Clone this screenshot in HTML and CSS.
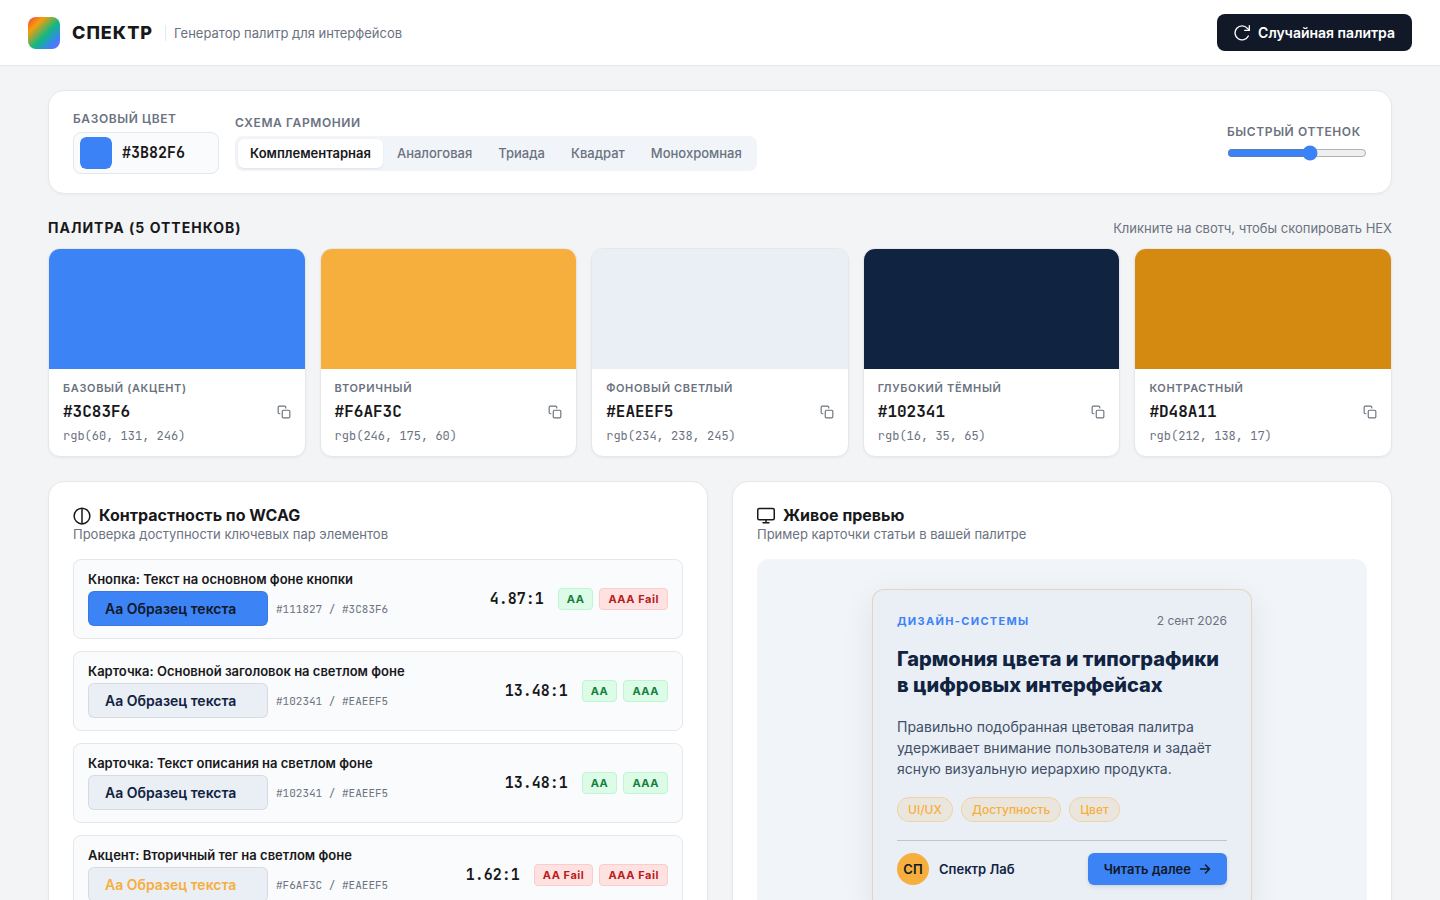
FILE: index.html
```html
<!DOCTYPE html>
<html lang="ru">
<head>
<meta charset="utf-8">
<meta name="viewport" content="width=device-width, initial-scale=1">
<title>Спектр — генератор палитр</title>
<link rel="stylesheet" href="styles.css">
</head>
<body>
<svg class="sprite" aria-hidden="true">
  <symbol id="copy" viewBox="0 0 24 24" fill="none" stroke="currentColor" stroke-width="2" stroke-linecap="round" stroke-linejoin="round">
    <rect x="9" y="9" width="13" height="13" rx="2"/>
    <path d="M5 15H4a2 2 0 0 1-2-2V4a2 2 0 0 1 2-2h9a2 2 0 0 1 2 2v1"/>
  </symbol>
</svg>

<header class="topbar">
  <div class="brand">
    <span class="logo"></span>
    <h1 class="brand-name">СПЕКТР</h1>
    <span class="tagline">Генератор палитр для интерфейсов</span>
  </div>
  <button class="btn-random" type="button">
    <svg width="16" height="16" viewBox="0 0 24 24" fill="none" stroke="currentColor" stroke-width="2" stroke-linecap="round" stroke-linejoin="round" aria-hidden="true"><path d="M23 1v7h-7"/><path d="M21.5 16.5A10.5 10.5 0 1 1 20 5l3 3"/></svg>
    Случайная палитра
  </button>
</header>

<main class="page">
  <section class="panel controls">
    <div class="control">
      <label class="control-label" for="hex">Базовый цвет</label>
      <div class="color-field">
        <input class="color-pick" type="color" value="#3b82f6" aria-label="Выбор базового цвета">
        <input class="color-hex" id="hex" type="text" value="#3B82F6">
      </div>
    </div>
    <div class="control">
      <span class="control-label" id="scheme">Схема гармонии</span>
      <div class="segmented" role="group" aria-labelledby="scheme">
        <button class="segment segment-active" type="button" aria-pressed="true">Комплементарная</button>
        <button class="segment" type="button">Аналоговая</button>
        <button class="segment" type="button">Триада</button>
        <button class="segment" type="button">Квадрат</button>
        <button class="segment" type="button">Монохромная</button>
      </div>
    </div>
    <div class="control control-end">
      <label class="control-label" for="hue">Быстрый оттенок</label>
      <input class="hue" id="hue" type="range" min="0" max="360" value="217">
    </div>
  </section>

  <section class="palette">
    <div class="palette-head">
      <h2 class="palette-title">Палитра (5 оттенков)</h2>
      <span class="hint">Кликните на свотч, чтобы скопировать HEX</span>
    </div>
    <div class="swatches">
      <article class="swatch">
        <button class="swatch-color fill-base" type="button" aria-label="Скопировать #3C83F6"></button>
        <div class="swatch-info">
          <span class="swatch-role">Базовый (акцент)</span>
          <div class="swatch-row"><span class="swatch-hex">#3C83F6</span><button class="copy" type="button" aria-label="Копировать"><svg width="14" height="14"><use href="#copy"/></svg></button></div>
          <span class="swatch-rgb">rgb(60, 131, 246)</span>
        </div>
      </article>
      <article class="swatch">
        <button class="swatch-color fill-second" type="button" aria-label="Скопировать #F6AF3C"></button>
        <div class="swatch-info">
          <span class="swatch-role">Вторичный</span>
          <div class="swatch-row"><span class="swatch-hex">#F6AF3C</span><button class="copy" type="button" aria-label="Копировать"><svg width="14" height="14"><use href="#copy"/></svg></button></div>
          <span class="swatch-rgb">rgb(246, 175, 60)</span>
        </div>
      </article>
      <article class="swatch">
        <button class="swatch-color fill-light" type="button" aria-label="Скопировать #EAEEF5"></button>
        <div class="swatch-info">
          <span class="swatch-role">Фоновый светлый</span>
          <div class="swatch-row"><span class="swatch-hex">#EAEEF5</span><button class="copy" type="button" aria-label="Копировать"><svg width="14" height="14"><use href="#copy"/></svg></button></div>
          <span class="swatch-rgb">rgb(234, 238, 245)</span>
        </div>
      </article>
      <article class="swatch">
        <button class="swatch-color fill-deep" type="button" aria-label="Скопировать #102341"></button>
        <div class="swatch-info">
          <span class="swatch-role">Глубокий тёмный</span>
          <div class="swatch-row"><span class="swatch-hex">#102341</span><button class="copy" type="button" aria-label="Копировать"><svg width="14" height="14"><use href="#copy"/></svg></button></div>
          <span class="swatch-rgb">rgb(16, 35, 65)</span>
        </div>
      </article>
      <article class="swatch">
        <button class="swatch-color fill-contrast" type="button" aria-label="Скопировать #D48A11"></button>
        <div class="swatch-info">
          <span class="swatch-role">Контрастный</span>
          <div class="swatch-row"><span class="swatch-hex">#D48A11</span><button class="copy" type="button" aria-label="Копировать"><svg width="14" height="14"><use href="#copy"/></svg></button></div>
          <span class="swatch-rgb">rgb(212, 138, 17)</span>
        </div>
      </article>
    </div>
  </section>

  <div class="columns">
    <section class="panel block">
      <div class="block-head">
        <h2 class="block-title">
          <svg width="18" height="18" viewBox="0 0 24 24" fill="none" stroke="currentColor" stroke-width="2" aria-hidden="true"><circle cx="12" cy="12" r="10.5"/><path d="M12 1.5v21"/></svg>
          Контрастность по WCAG
        </h2>
        <p class="block-sub">Проверка доступности ключевых пар элементов</p>
      </div>
      <div class="checks">
        <div class="check">
          <div class="check-main">
            <h3 class="check-title">Кнопка: Текст на основном фоне кнопки</h3>
            <div class="check-pair"><span class="sample sample-base">Aa Образец текста</span><span class="codes">#111827 / #3C83F6</span></div>
          </div>
          <span class="ratio">4.87:1</span>
          <div class="badges"><span class="badge badge-pass">AA</span><span class="badge badge-fail">AAA Fail</span></div>
        </div>
        <div class="check">
          <div class="check-main">
            <h3 class="check-title">Карточка: Основной заголовок на светлом фоне</h3>
            <div class="check-pair"><span class="sample sample-light">Aa Образец текста</span><span class="codes">#102341 / #EAEEF5</span></div>
          </div>
          <span class="ratio">13.48:1</span>
          <div class="badges"><span class="badge badge-pass">AA</span><span class="badge badge-pass">AAA</span></div>
        </div>
        <div class="check">
          <div class="check-main">
            <h3 class="check-title">Карточка: Текст описания на светлом фоне</h3>
            <div class="check-pair"><span class="sample sample-light">Aa Образец текста</span><span class="codes">#102341 / #EAEEF5</span></div>
          </div>
          <span class="ratio">13.48:1</span>
          <div class="badges"><span class="badge badge-pass">AA</span><span class="badge badge-pass">AAA</span></div>
        </div>
        <div class="check">
          <div class="check-main">
            <h3 class="check-title">Акцент: Вторичный тег на светлом фоне</h3>
            <div class="check-pair"><span class="sample sample-tag">Aa Образец текста</span><span class="codes">#F6AF3C / #EAEEF5</span></div>
          </div>
          <span class="ratio">1.62:1</span>
          <div class="badges"><span class="badge badge-fail">AA Fail</span><span class="badge badge-fail">AAA Fail</span></div>
        </div>
      </div>
    </section>

    <section class="panel block">
      <div class="block-head">
        <h2 class="block-title">
          <svg width="18" height="18" viewBox="0 0 24 24" fill="none" stroke="currentColor" stroke-width="2" stroke-linecap="round" stroke-linejoin="round" aria-hidden="true"><rect x="1" y="2" width="22" height="15" rx="2"/><path d="M8 21h8M12 17v4"/></svg>
          Живое превью
        </h2>
        <p class="block-sub">Пример карточки статьи в вашей палитре</p>
      </div>
      <div class="stage">
        <article class="post">
          <div class="post-meta"><span class="post-topic">Дизайн-системы</span><time class="post-date" datetime="2026-09-02">2 сент 2026</time></div>
          <h3 class="post-title">Гармония цвета и типографики в цифровых интерфейсах</h3>
          <p class="post-text">Правильно подобранная цветовая палитра удерживает внимание пользователя и задаёт ясную визуальную иерархию продукта.</p>
          <div class="tags"><span class="tag">UI/UX</span><span class="tag">Доступность</span><span class="tag">Цвет</span></div>
          <div class="post-foot">
            <span class="avatar">СП</span>
            <span class="author">Спектр Лаб</span>
            <button class="btn-read" type="button">Читать далее
              <svg width="12" height="12" viewBox="0 0 24 24" fill="none" stroke="currentColor" stroke-width="3" stroke-linecap="round" stroke-linejoin="round" aria-hidden="true"><path d="M3 12h18M13 4l8 8-8 8"/></svg>
            </button>
          </div>
        </article>
      </div>
    </section>
  </div>
</main>
</body>
</html>
```
FILE: styles.css
```css
:root {
  --base: #3c83f6;
  --second: #f6af3c;
  --light: #eaeef5;
  --deep: #102341;
  --contrast: #d48a11;
  --ink: #18181b;
  --muted: #6b7280;
  --line: #e5e7eb;
  --mono: "JetBrains Mono", "DejaVu Sans Mono", "Liberation Mono", monospace;
}

* { box-sizing: border-box; }

body {
  margin: 0;
  background: #f3f4f6;
  color: var(--ink);
  font-family: Inter, "Liberation Sans", sans-serif;
  font-size: 14px;
}

h1, h2, h3, p { margin: 0; }

button, input { font: inherit; color: inherit; margin: 0; }

button { border: 0; padding: 0; background: none; cursor: pointer; }

.sprite { display: none; }

.topbar {
  display: flex;
  align-items: center;
  justify-content: space-between;
  padding: 14px 28px;
  background: #fff;
  border-bottom: 1px solid var(--line);
}

.brand { display: flex; align-items: center; gap: 12px; }

.logo {
  width: 32px;
  height: 32px;
  border-radius: 8px;
  background: linear-gradient(135deg, #ef4444 0%, #f59e0b 25%, #10b981 55%, #3b82f6 80%, #8b5cf6 100%);
}

.brand-name { font-size: 18px; line-height: 24px; font-weight: 800; letter-spacing: 1px; }

.tagline {
  padding-left: 8px;
  border-left: 1px solid var(--line);
  color: var(--muted);
  font-size: 13px;
  line-height: 16px;
}

.btn-random {
  display: flex;
  align-items: center;
  gap: 8px;
  padding: 10px 17px;
  border-radius: 8px;
  background: #111827;
  color: #fff;
  font-weight: 600;
  line-height: 17px;
}

.page { display: flex; flex-direction: column; gap: 24px; padding: 24px 48px; }

.panel {
  background: #fff;
  border: 1px solid var(--line);
  border-radius: 16px;
  box-shadow: 0 1px 3px rgba(0, 0, 0, .04);
}

.controls { display: flex; align-items: center; gap: 16px; padding: 20px 24px 19px; }

.control { display: flex; flex-direction: column; gap: 6px; }

.control-end { margin-left: auto; }

.control-label {
  color: var(--muted);
  font-size: 12px;
  font-weight: 600;
  line-height: 15px;
  letter-spacing: .05em;
  text-transform: uppercase;
}

.color-field {
  display: flex;
  align-items: center;
  gap: 10px;
  padding: 4px 6px;
  border: 1px solid var(--line);
  border-radius: 8px;
  background: #fafbfc;
}

.color-pick {
  appearance: none;
  width: 32px;
  height: 32px;
  padding: 0;
  border: 0;
  border-radius: 6px;
  background: none;
  overflow: hidden;
}

.color-pick::-webkit-color-swatch-wrapper { padding: 0; }
.color-pick::-webkit-color-swatch { border: 0; border-radius: 6px; }

.color-hex {
  width: 90px;
  padding: 0;
  border: 0;
  outline: 0;
  background: none;
  font-family: var(--mono);
  font-size: 15px;
  font-weight: 600;
}

.segmented { display: flex; gap: 2px; padding: 3px; border-radius: 8px; background: #f1f5f9; }

.segment {
  padding: 6px 12px;
  border-radius: 6px;
  color: var(--muted);
  font-size: 13px;
  font-weight: 500;
  line-height: 17px;
}

.segment-active { background: #fff; color: var(--ink); font-weight: 600; box-shadow: 0 1px 2px rgba(0, 0, 0, .08); }

.hue { width: 140px; height: 16px; accent-color: #3b82f6; }

.palette { display: flex; flex-direction: column; gap: 10px; }

.palette-head { display: flex; align-items: center; justify-content: space-between; line-height: 20px; }

.palette-title { font-size: 14px; font-weight: 700; letter-spacing: 1px; text-transform: uppercase; }

.hint { color: var(--muted); font-size: 13px; }

.swatches { display: grid; grid-template-columns: repeat(5, 1fr); gap: 14px; }

.swatch {
  display: flex;
  flex-direction: column;
  border: 1px solid var(--line);
  border-radius: 12px;
  overflow: hidden;
  background: #fff;
  box-shadow: 0 1px 3px rgba(0, 0, 0, .05);
}

.swatch-color { height: 120px; }

.fill-base { background: var(--base); }
.fill-second { background: var(--second); }
.fill-light { background: var(--light); }
.fill-deep { background: var(--deep); }
.fill-contrast { background: var(--contrast); }

.swatch-info { display: flex; flex-direction: column; gap: 6px; padding: 12px 14px 13px; }

.swatch-role {
  color: var(--muted);
  font-size: 11px;
  font-weight: 600;
  line-height: 14px;
  letter-spacing: .06em;
  text-transform: uppercase;
}

.swatch-row { display: flex; align-items: center; justify-content: space-between; }

.swatch-hex { font-family: var(--mono); font-size: 16px; font-weight: 600; line-height: 22px; }

.swatch-rgb { color: var(--muted); font-family: var(--mono); font-size: 12px; line-height: 14px; }

.copy { display: flex; color: var(--muted); }

.columns { display: grid; grid-template-columns: 1fr 1fr; gap: 24px; }

.block { display: flex; flex-direction: column; gap: 16px; padding: 24px; }

.block-title { display: flex; align-items: center; gap: 8px; font-size: 16px; font-weight: 700; line-height: 19px; }

.block-sub { color: var(--muted); font-size: 13px; line-height: 18px; }

.checks { display: flex; flex-direction: column; gap: 12px; }

.check {
  display: flex;
  align-items: center;
  gap: 14px;
  padding: 12px 14px;
  border: 1px solid var(--line);
  border-radius: 8px;
  background: #fafbfc;
}

.check-main { display: flex; flex: 1; flex-direction: column; gap: 4px; }

.check-title { font-size: 13px; font-weight: 600; line-height: 15px; }

.check-pair { display: flex; align-items: center; gap: 8px; }

.sample {
  width: 180px;
  padding: 8px 16px;
  border: 1px solid rgba(0, 0, 0, .08);
  border-radius: 6px;
  font-weight: 600;
  line-height: 17px;
}

.sample-base { background: var(--base); color: #111827; }
.sample-light { background: var(--light); color: var(--deep); }
.sample-tag { background: var(--light); color: var(--second); }

.codes { color: var(--muted); font-family: var(--mono); font-size: 11px; }

.ratio { font-family: var(--mono); font-size: 15px; font-weight: 600; }

.badges { display: flex; gap: 6px; }

.badge {
  padding: 3px 8px;
  border: 1px solid;
  border-radius: 4px;
  font-size: 11px;
  font-weight: 700;
  line-height: 14px;
  letter-spacing: .05em;
}

.badge-pass { background: #dcfce7; border-color: #bbf7d0; color: #15803d; }
.badge-fail { background: #fee2e2; border-color: #fecaca; color: #b91c1c; }

.stage {
  display: flex;
  align-items: center;
  justify-content: center;
  min-height: 380px;
  border-radius: 12px;
  background: #f1f5f9;
}

.post {
  display: flex;
  flex-direction: column;
  gap: 18px;
  width: 380px;
  max-width: 100%;
  padding: 24px;
  border: 1px solid rgba(212, 138, 17, .25);
  border-radius: 12px;
  background: var(--light);
  color: var(--deep);
  box-shadow: 0 8px 32px rgba(0, 0, 0, .08);
}

.post-meta { display: flex; align-items: center; justify-content: space-between; line-height: 14px; }

.post-topic { color: var(--base); font-size: 11px; font-weight: 700; letter-spacing: .12em; text-transform: uppercase; }

.post-date { color: var(--muted); font-size: 12px; }

.post-title { font-size: 20px; font-weight: 800; line-height: 26px; }

.post-text { color: #404f67; line-height: 21px; }

.tags { display: flex; gap: 8px; }

.tag {
  padding: 4px 10px;
  border: 1px solid rgba(246, 175, 60, .35);
  border-radius: 13px;
  background: rgba(246, 175, 60, .13);
  color: var(--second);
  font-size: 12px;
  font-weight: 500;
  line-height: 15px;
}

.post-foot { display: flex; align-items: center; gap: 10px; padding-top: 12px; border-top: 1px solid rgba(16, 35, 65, .2); }

.avatar {
  display: grid;
  place-items: center;
  width: 32px;
  height: 32px;
  border-radius: 50%;
  background: var(--second);
  color: #111827;
  font-size: 13px;
  font-weight: 600;
}

.author { font-size: 13px; font-weight: 600; }

.btn-read {
  display: flex;
  align-items: center;
  gap: 8px;
  margin-left: auto;
  padding: 8px 16px;
  border-radius: 6px;
  background: var(--base);
  color: #111827;
  font-size: 13px;
  font-weight: 600;
  line-height: 16px;
  box-shadow: 0 2px 4px rgba(0, 0, 0, .1);
}
```
